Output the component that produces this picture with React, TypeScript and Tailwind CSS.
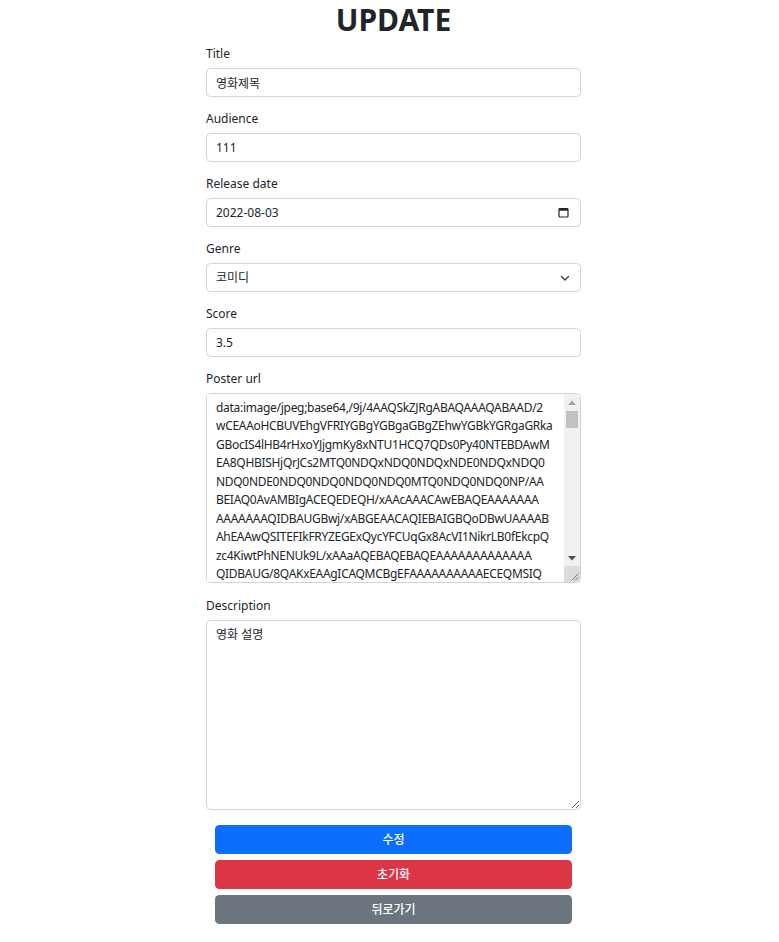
import React from "react";

const posterLines = [
  "data:image/jpeg;base64,/9j/4AAQSkZJRgABAQAAAQABAAD/2",
  "wCEAAoHCBUVEhgVFRIYGBgYGBgaGBgZEhwYGBkYGRgaGRka",
  "GBocIS4lHB4rHxoYJjgmKy8xNTU1HCQ7QDs0Py40NTEBDAwM",
  "EA8QHBISHjQrJCs2MTQ0NDQxNDQ0NDQxNDE0NDQxNDQ0",
  "NDQ0NDE0NDQ0NDQ0NDQ0NDQ0MTQ0NDQ0NDQ0NP/AA",
  "BEIAQ0AvAMBIgACEQEDEQH/xAAcAAACAwEBAQEAAAAAAA",
  "AAAAAAAQIDBAUGBwj/xABGEAACAQIEBAIGBQoDBwUAAAAB",
  "AhEAAwQSITEFIkFRYZEGExQycYFCUqGx8AcVI1NikrLB0fEkcpQ",
  "zc4KiwtPhNENUk9L/xAAaAQEBAQEBAQEAAAAAAAAAAAAA",
  "QIDBAUG/8QAKxEAAgICAQMCBgEFAAAAAAAAAAECEQMSIQ",
  "ABAyIxQVFhE0GBkaHwYXGx0eEUIjLB8f/aAAwDAQACEQMRAD8A",
  "8vfYFlbJUmNg3P9nTfOWtpc4YVMeqU2Lh3X1wrbTJqwxpp9",
];

const font = "font-['Noto_Sans','Noto_Sans_CJK_KR',sans-serif]";

function Label({ children }: { children: React.ReactNode }) {
  return <label className="block text-[12px] leading-[18px] text-[#212529] pt-[1px] mb-[5px]">{children}</label>;
}

const inputCls =
  "block w-full h-[29px] px-[9px] text-[12px] leading-[18px] text-[#212529] bg-white border border-[#ced4da] rounded-[4.5px] outline-none";

export default function App() {
  return (
    <div className={`${font} bg-white min-h-[942px] pl-[8px]`}>
      <div className="w-[375px] mx-auto">
        <h1 className="text-[30px] leading-[36px] font-bold text-center text-[#212529] pt-[2px] mb-[6px]">UPDATE</h1>

        <div className="mb-[12px]">
          <Label>Title</Label>
          <input className={inputCls} defaultValue="영화제목" />
        </div>
        <div className="mb-[12px]">
          <Label>Audience</Label>
          <input className={inputCls} defaultValue="111" />
        </div>
        <div className="mb-[12px]">
          <Label>Release date</Label>
          <div className="relative">
            <input className={inputCls} defaultValue="2022-08-03" />
            <svg className="absolute right-[12px] top-[9px]" width="11" height="11" viewBox="0 0 11 11">
              <rect x="1" y="1.5" width="9" height="8.5" rx="1" fill="none" stroke="#212529" strokeWidth="1.2" />
              <rect x="1" y="1.5" width="9" height="2.2" fill="#212529" />
            </svg>
          </div>
        </div>
        <div className="mb-[12px]">
          <Label>Genre</Label>
          <div className="relative">
            <select className={`${inputCls} appearance-none`} defaultValue="코미디">
              <option>코미디</option>
              <option>액션</option>
              <option>드라마</option>
            </select>
            <svg className="absolute right-[11px] top-[11px]" width="10" height="8" viewBox="0 0 10 8">
              <path d="M1.5 2.5 L5 6 L8.5 2.5" fill="none" stroke="#343a40" strokeWidth="1.3" strokeLinecap="round" strokeLinejoin="round" />
            </svg>
          </div>
        </div>
        <div className="mb-[12px]">
          <Label>Score</Label>
          <input className={inputCls} defaultValue="3.5" />
        </div>
        <div className="mb-[13px]">
          <Label>Poster url</Label>
          <div className="relative">
            <textarea
              className="block w-full h-[190px] pl-[9px] pr-[25px] py-[4.5px] text-[12px] leading-[18.5px] tracking-[-0.3px] text-[#212529] bg-white border border-[#ced4da] rounded-[4.5px] outline-none whitespace-pre overflow-x-hidden overflow-y-scroll resize-none [scrollbar-width:none]"
              wrap="off"
              defaultValue={posterLines.join("\n")}
            />
            <div className="absolute right-[1px] top-[1px] bottom-[1px] w-[16px] flex flex-col bg-[#f1f1f1] rounded-tr-[3.5px]">
              <div className="h-[16px] flex items-center justify-center">
                <svg width="8" height="5" viewBox="0 0 8 5">
                  <path d="M0 5 L4 0.5 L8 5 Z" fill="#a3a3a3" />
                </svg>
              </div>
              <div className="flex-1 px-[2px] pt-[1px]">
                <div className="h-[17px] bg-[#c1c1c1]" />
              </div>
              <div className="h-[16px] flex items-center justify-center">
                <svg width="8" height="5" viewBox="0 0 8 5">
                  <path d="M0 0 L4 4.5 L8 0 Z" fill="#505050" />
                </svg>
              </div>
              <div className="h-[16px] bg-[#dcdcdc] relative">
                <svg className="absolute right-[1px] bottom-[1px]" width="10" height="10" viewBox="0 0 10 10">
                  <path d="M9.5 2.5 L2.5 9.5 M9.5 6 L6 9.5" stroke="#6e6e6e" strokeWidth="0.9" />
                </svg>
              </div>
            </div>
          </div>
        </div>
        <div>
          <Label>Description</Label>
          <textarea
            className="block w-full h-[190px] px-[9px] py-[4.5px] text-[12px] leading-[18px] text-[#212529] bg-white border border-[#ced4da] rounded-[4.5px] outline-none"
            defaultValue="영화 설명"
          />
        </div>

        <div className="mt-[15px] px-[9px] flex flex-col gap-[6px]">
          <button className="h-[29px] w-full rounded-[4.5px] bg-[#0d6efd] text-white text-[12px] font-medium">수정</button>
          <button className="h-[29px] w-full rounded-[4.5px] bg-[#dc3545] text-white text-[12px] font-medium">초기화</button>
          <button className="h-[29px] w-full rounded-[4.5px] bg-[#6c757d] text-white text-[12px] font-medium">뒤로가기</button>
        </div>
      </div>
    </div>
  );
}
